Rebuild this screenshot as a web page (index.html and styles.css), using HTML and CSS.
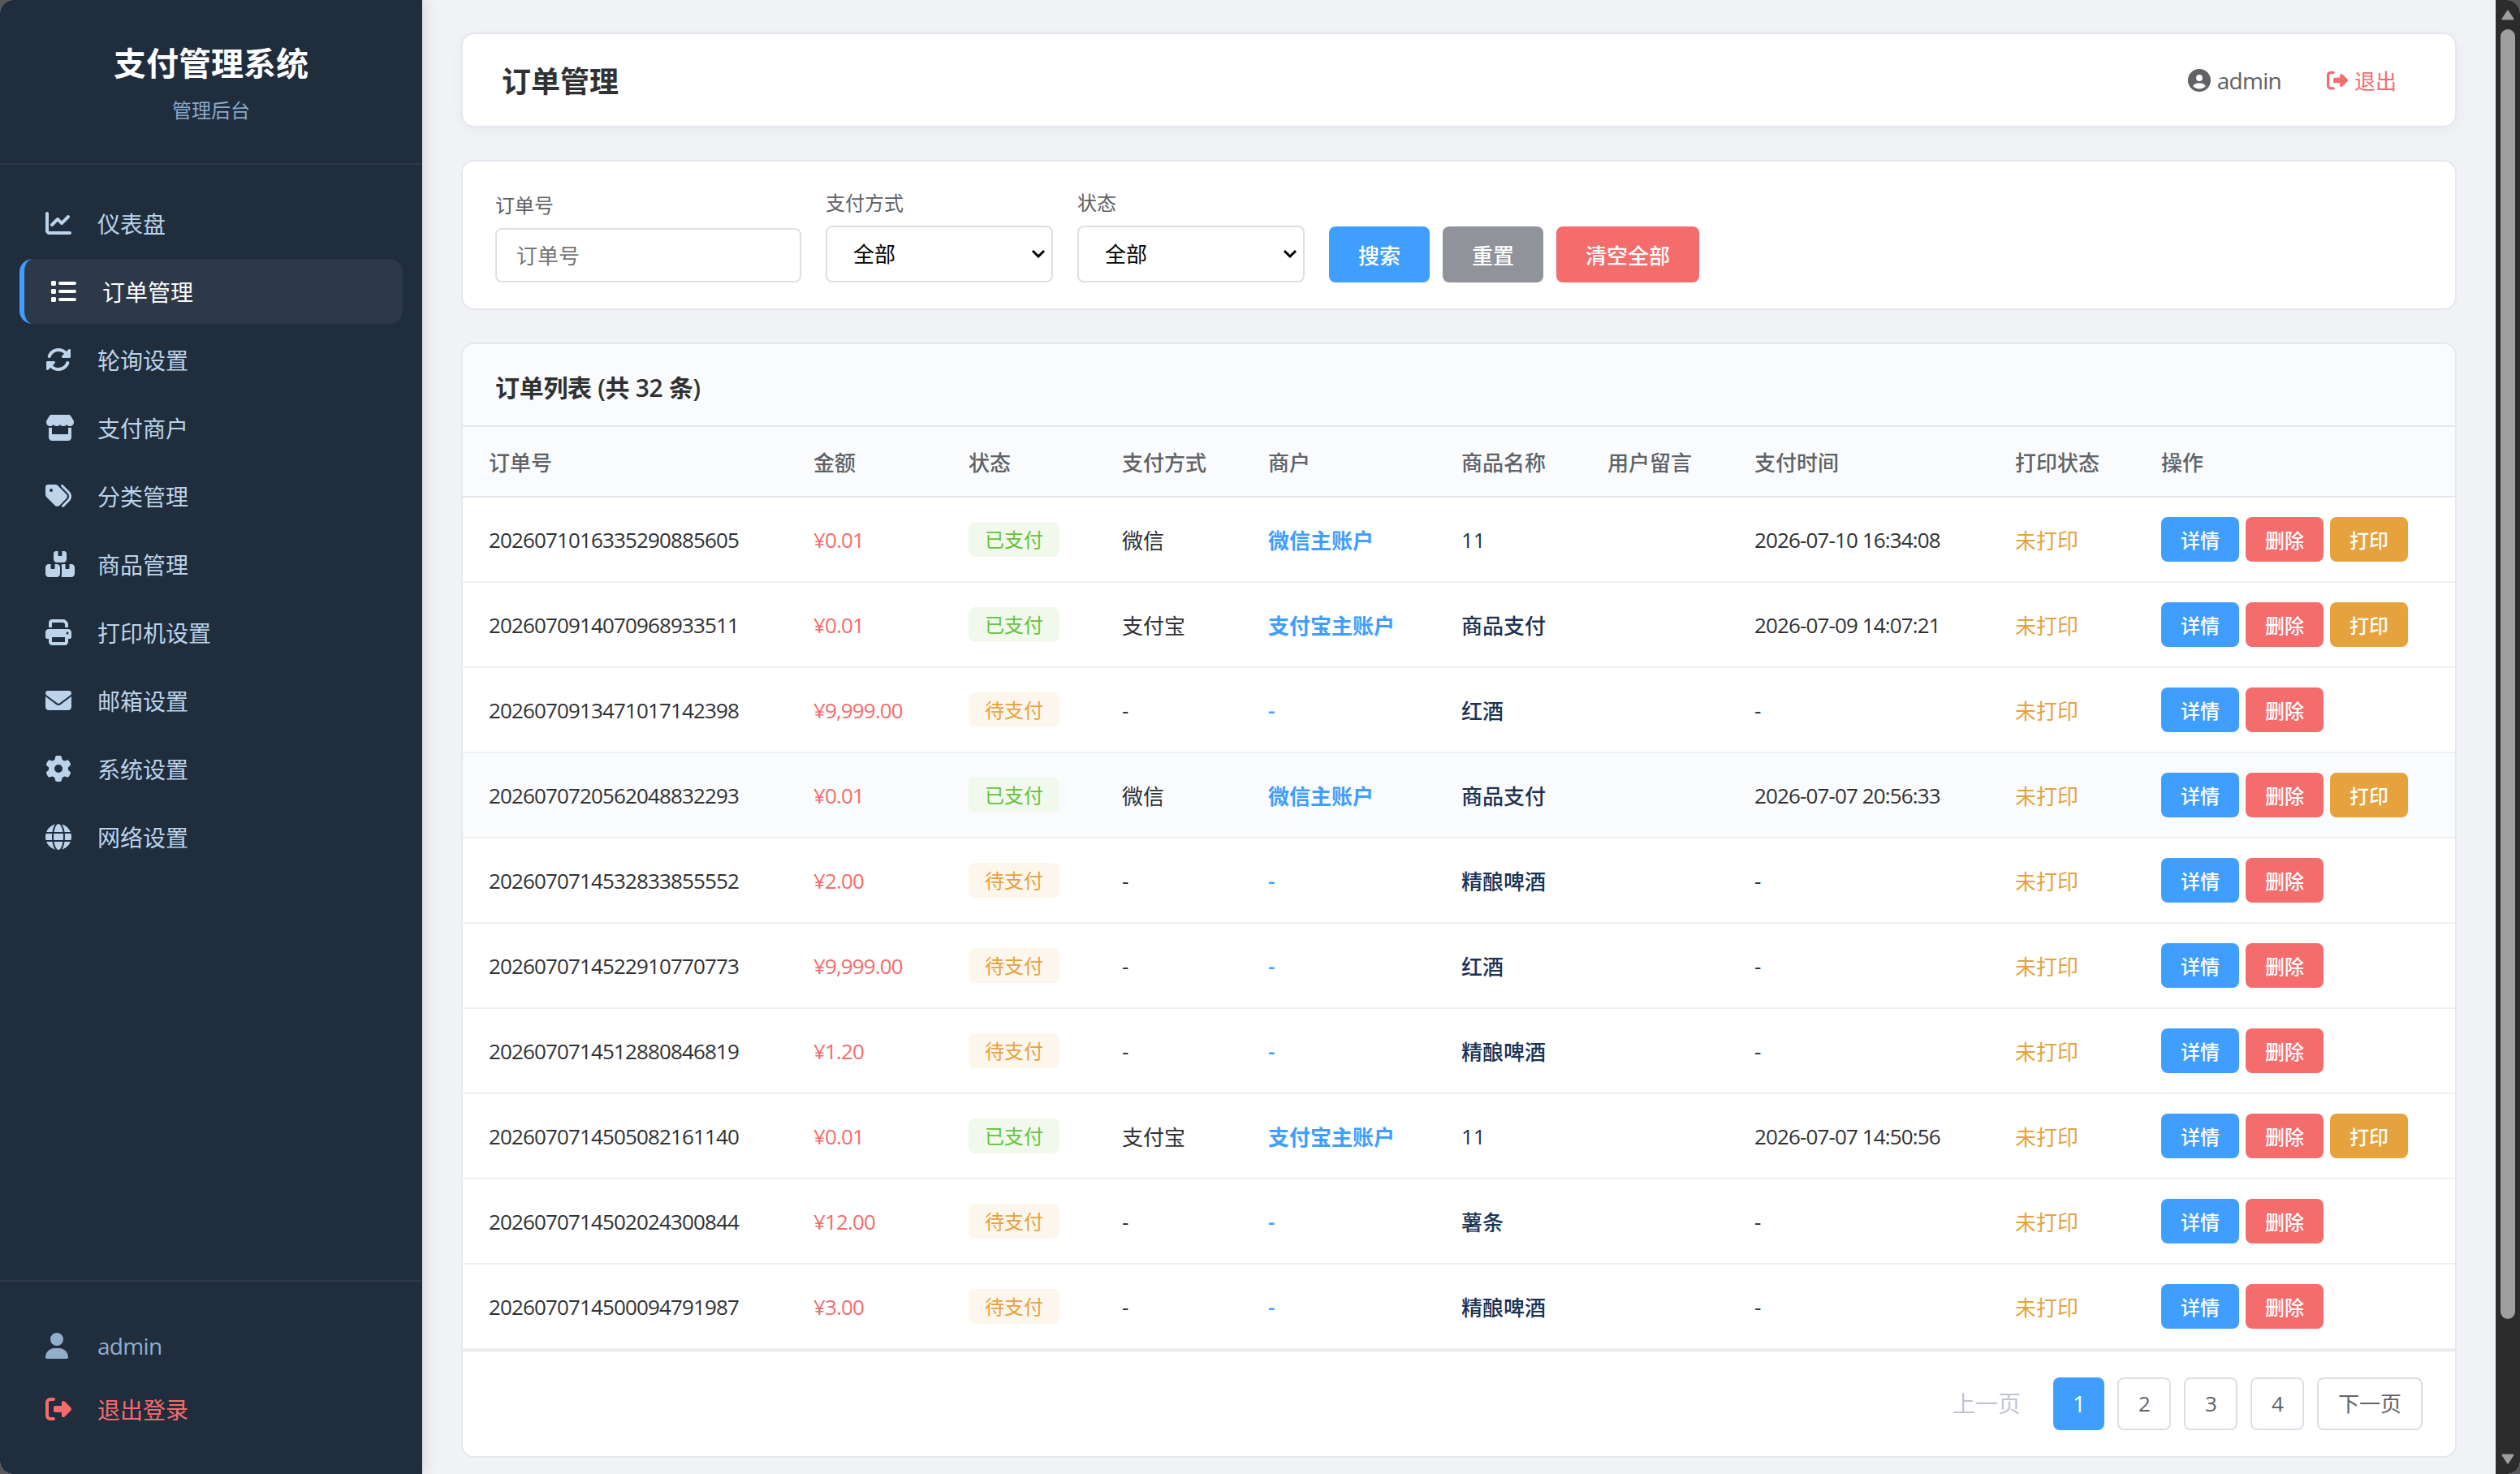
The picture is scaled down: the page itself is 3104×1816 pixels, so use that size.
FILE: index.html
```html
<!DOCTYPE html>
<html lang="zh-CN">
  <head>
    <meta charset="utf-8" />
    <meta name="viewport" content="width=device-width, initial-scale=1.0" />
    <title>订单管理 - 支付管理系统</title>
    <link rel="stylesheet" href="styles.css">
  </head>
  <body>
    <div class="layout">
      <aside class="sidebar">
        <div class="sidebar-header">
          <h2>支付管理系统</h2>
          <p>管理后台</p>
        </div>
        <nav class="sidebar-nav">
          <a class="nav-item">
            <svg class="icon" viewBox="0 0 512 512"><path d="M64 64c0-17.7-14.3-32-32-32S0 46.3 0 64V400c0 44.2 35.8 80 80 80H480c17.7 0 32-14.3 32-32s-14.3-32-32-32H80c-8.8 0-16-7.2-16-16V64zm406.6 86.6c12.5-12.5 12.5-32.8 0-45.3s-32.8-12.5-45.3 0L320 210.7l-57.4-57.4c-12.5-12.5-32.8-12.5-45.3 0l-112 112c-12.5 12.5-12.5 32.8 0 45.3s32.8 12.5 45.3 0L240 221.3l57.4 57.4c12.5 12.5 32.8 12.5 45.3 0l128-128z"/></svg>
            <span>仪表盘</span>
          </a>
          <a class="nav-item active">
            <svg class="icon" viewBox="0 0 512 512"><path d="M40 48C26.7 48 16 58.7 16 72v48c0 13.3 10.7 24 24 24H88c13.3 0 24-10.7 24-24V72c0-13.3-10.7-24-24-24H40zM192 64c-17.7 0-32 14.3-32 32s14.3 32 32 32H480c17.7 0 32-14.3 32-32s-14.3-32-32-32H192zm0 160c-17.7 0-32 14.3-32 32s14.3 32 32 32H480c17.7 0 32-14.3 32-32s-14.3-32-32-32H192zm0 160c-17.7 0-32 14.3-32 32s14.3 32 32 32H480c17.7 0 32-14.3 32-32s-14.3-32-32-32H192zM16 232v48c0 13.3 10.7 24 24 24H88c13.3 0 24-10.7 24-24V232c0-13.3-10.7-24-24-24H40c-13.3 0-24 10.7-24 24zM40 368c-13.3 0-24 10.7-24 24v48c0 13.3 10.7 24 24 24H88c13.3 0 24-10.7 24-24V392c0-13.3-10.7-24-24-24H40z"/></svg>
            <span>订单管理</span>
          </a>
          <a class="nav-item">
            <svg class="icon" viewBox="0 0 512 512"><path d="M142.9 142.9c62.2-62.2 162.7-62.5 225.3-1L327 183c-6.9 6.9-8.9 17.2-5.2 26.2s12.5 14.8 22.2 14.8H472c13.3 0 24-10.7 24-24V72c0-9.7-5.8-18.5-14.8-22.2s-19.3-1.7-26.2 5.2L413.4 96.6c-87.6-86.5-228.7-86.2-315.8 1C73.2 122 55.6 150.7 44.8 181.4c-5.9 16.7 2.9 34.9 19.5 40.8s34.9-2.9 40.8-19.5c7.7-21.8 20.2-42.3 37.8-59.8zM16 312v128c0 9.7 5.8 18.5 14.8 22.2s19.3 1.7 26.2-5.2l41.6-41.6c87.6 86.5 228.7 86.2 315.8-1c24.4-24.4 42.1-53.1 52.9-83.7c5.9-16.7-2.9-34.9-19.5-40.8s-34.9 2.9-40.8 19.5c-7.7 21.8-20.2 42.3-37.8 59.8c-62.2 62.2-162.7 62.5-225.3 1L185 329c6.9-6.9 8.9-17.2 5.2-26.2s-12.5-14.8-22.2-14.8H40c-13.3 0-24 10.7-24 24z"/></svg>
            <span>轮询设置</span>
          </a>
          <a class="nav-item">
            <svg class="icon icon-wide" viewBox="0 0 576 512"><path d="M547.6 103.8L490.3 13.1C485.2 5 476.1 0 466.4 0H109.6C99.9 0 90.8 5 85.7 13.1L28.3 103.8c-29.6 46.8-3.4 111.9 51.9 119.4c4 .5 8.1 .8 12.1 .8c26.1 0 49.3-11.4 65.2-29c15.9 17.6 39.1 29 65.2 29c26.1 0 49.3-11.4 65.2-29c15.9 17.6 39.1 29 65.2 29c26.2 0 49.3-11.4 65.2-29c16 17.6 39.1 29 65.2 29c4.1 0 8.1-.3 12.1-.8c55.5-7.4 81.8-72.5 52.1-119.4zM499.7 254.9l-.1 0c-5.3 .7-10.7 1.1-16.2 1.1c-12.4 0-24.3-1.9-35.4-5.3V384H128V250.6c-11.2 3.5-23.2 5.4-35.6 5.4c-5.5 0-11-.4-16.3-1.1l-.1 0c-4.1-.6-8.1-1.3-12-2.3V384v64c0 35.3 28.7 64 64 64H448c35.3 0 64-28.7 64-64V384 252.6c-4 1-8 1.8-12.3 2.3z"/></svg>
            <span>支付商户</span>
          </a>
          <a class="nav-item">
            <svg class="icon" viewBox="0 0 512 512"><path d="M345 39.1L472.8 168.4c52.4 53 52.4 138.2 0 191.2L360.8 472.9c-9.3 9.4-24.5 9.5-33.9 .2s-9.5-24.5-.2-33.9L438.6 325.9c33.9-34.3 33.9-89.4 0-123.7L310.9 72.9c-9.3-9.4-9.2-24.6 .2-33.9s24.6-9.2 33.9 .2zM0 229.5V80C0 53.5 21.5 32 48 32H197.5c17 0 33.3 6.7 45.3 18.7l168 168c25 25 25 65.5 0 90.5L277.3 442.7c-25 25-65.5 25-90.5 0l-168-168C6.7 262.7 0 246.5 0 229.5zM144 144a32 32 0 1 0 -64 0 32 32 0 1 0 64 0z"/></svg>
            <span>分类管理</span>
          </a>
          <a class="nav-item">
            <svg class="icon icon-wide" viewBox="0 0 576 512"><path d="M248 0H208c-26.5 0-48 21.5-48 48V160c0 35.3 28.7 64 64 64H352c35.3 0 64-28.7 64-64V48c0-26.5-21.5-48-48-48H328V80c0 8.8-7.2 16-16 16H264c-8.8 0-16-7.2-16-16V0zM64 256c-35.3 0-64 28.7-64 64V448c0 35.3 28.7 64 64 64H224c35.3 0 64-28.7 64-64V320c0-35.3-28.7-64-64-64H184v80c0 8.8-7.2 16-16 16H120c-8.8 0-16-7.2-16-16V256H64zM352 512H512c35.3 0 64-28.7 64-64V320c0-35.3-28.7-64-64-64H472v80c0 8.8-7.2 16-16 16H408c-8.8 0-16-7.2-16-16V256H352c-15 0-28.8 5.1-39.7 13.8c4.9 10.4 7.7 22 7.7 34.2V464c0 12.2-2.8 23.8-7.7 34.2C323.2 506.9 337 512 352 512z"/></svg>
            <span>商品管理</span>
          </a>
          <a class="nav-item">
            <svg class="icon" viewBox="0 0 512 512"><path d="M128 0C92.7 0 64 28.7 64 64v96h64V64H354.7L384 93.3V160h64V93.3c0-17-6.7-33.3-18.7-45.3L400 18.7C388 6.7 371.7 0 354.7 0H128zM384 352v32 64H128V384 368 352H384zm64 32h32c17.7 0 32-14.3 32-32V256c0-35.3-28.7-64-64-64H64c-35.3 0-64 28.7-64 64v96c0 17.7 14.3 32 32 32H64v64c0 35.3 28.7 64 64 64H384c35.3 0 64-28.7 64-64V384zM432 248a24 24 0 1 1 0 48 24 24 0 1 1 0-48z"/></svg>
            <span>打印机设置</span>
          </a>
          <a class="nav-item">
            <svg class="icon" viewBox="0 0 512 512"><path d="M48 64C21.5 64 0 85.5 0 112c0 15.1 7.1 29.3 19.2 38.4L236.8 313.6c11.4 8.5 27 8.5 38.4 0L492.8 150.4c12.1-9.1 19.2-23.3 19.2-38.4c0-26.5-21.5-48-48-48H48zM0 176V384c0 35.3 28.7 64 64 64H448c35.3 0 64-28.7 64-64V176L294.4 339.2c-22.8 17.1-54 17.1-76.8 0L0 176z"/></svg>
            <span>邮箱设置</span>
          </a>
          <a class="nav-item">
            <svg class="icon" viewBox="0 0 512 512"><path d="M495.9 166.6c3.2 8.7 .5 18.4-6.4 24.6l-43.3 39.4c1.1 8.3 1.7 16.8 1.7 25.4s-.6 17.1-1.7 25.4l43.3 39.4c6.9 6.2 9.6 15.9 6.4 24.6c-4.4 11.9-9.7 23.3-15.8 34.3l-4.7 8.1c-6.6 11-14 21.4-22.1 31.2c-5.9 7.2-15.7 9.6-24.5 6.8l-55.7-17.7c-13.4 10.3-28.2 18.9-44 25.4l-12.5 57.1c-2 9.1-9 16.3-18.2 17.8c-13.8 2.3-28 3.5-42.5 3.5s-28.7-1.2-42.5-3.5c-9.2-1.5-16.2-8.7-18.2-17.8l-12.5-57.1c-15.8-6.5-30.6-15.1-44-25.4L83.1 425.9c-8.8 2.8-18.6 .3-24.5-6.8c-8.1-9.8-15.5-20.2-22.1-31.2l-4.7-8.1c-6.1-11-11.4-22.4-15.8-34.3c-3.2-8.7-.5-18.4 6.4-24.6l43.3-39.4C64.6 273.1 64 264.6 64 256s.6-17.1 1.7-25.4L22.4 191.2c-6.9-6.2-9.6-15.9-6.4-24.6c4.4-11.9 9.7-23.3 15.8-34.3l4.7-8.1c6.6-11 14-21.4 22.1-31.2c5.9-7.2 15.7-9.6 24.5-6.8l55.7 17.7c13.4-10.3 28.2-18.9 44-25.4l12.5-57.1c2-9.1 9-16.3 18.2-17.8C227.3 1.2 241.5 0 256 0s28.7 1.2 42.5 3.5c9.2 1.5 16.2 8.7 18.2 17.8l12.5 57.1c15.8 6.5 30.6 15.1 44 25.4l55.7-17.7c8.8-2.8 18.6-.3 24.5 6.8c8.1 9.8 15.5 20.2 22.1 31.2l4.7 8.1c6.1 11 11.4 22.4 15.8 34.3zM256 336a80 80 0 1 0 0-160 80 80 0 1 0 0 160z"/></svg>
            <span>系统设置</span>
          </a>
          <a class="nav-item">
            <svg class="icon" viewBox="0 0 512 512"><path d="M352 256c0 22.2-1.2 43.6-3.3 64H163.3c-2.2-20.4-3.3-41.8-3.3-64s1.2-43.6 3.3-64H348.7c2.2 20.4 3.3 41.8 3.3 64zm28.8-64H503.9c5.3 20.5 8.1 41.9 8.1 64s-2.8 43.5-8.1 64H380.8c2.1-20.6 3.2-42 3.2-64s-1.1-43.4-3.2-64zm112.6-32H376.7c-10-63.9-29.8-117.4-55.3-151.6c78.3 20.7 142 77.5 171.9 151.6zm-149.1 0H167.7c6.1-36.4 15.5-68.6 27-94.7c10.5-23.6 22.2-40.7 33.5-51.5C239.4 3.2 248.7 0 256 0s16.6 3.2 27.8 13.8c11.3 10.8 23 27.9 33.5 51.5c11.6 26 20.9 58.2 27 94.7zm-209 0H18.6C48.6 85.9 112.2 29.1 190.6 8.4C165.1 42.6 145.3 96.1 135.3 160zM8.1 192H131.2c-2.1 20.6-3.2 42-3.2 64s1.1 43.4 3.2 64H8.1C2.8 299.5 0 278.1 0 256s2.8-43.5 8.1-64zM194.7 446.6c-11.6-26-20.9-58.2-27-94.6H344.3c-6.1 36.4-15.5 68.6-27 94.6c-10.5 23.6-22.2 40.7-33.5 51.5C272.6 508.8 263.3 512 256 512s-16.6-3.2-27.8-13.8c-11.3-10.8-23-27.9-33.5-51.5zM135.3 352c10 63.9 29.8 117.4 55.3 151.6C112.2 482.9 48.6 426.1 18.6 352H135.3zm358.1 0c-30 74.1-93.6 130.9-171.9 151.6c25.5-34.2 45.2-87.7 55.3-151.6H493.4z"/></svg>
            <span>网络设置</span>
          </a>
        </nav>
        <div class="sidebar-footer">
          <div class="footer-item">
            <svg class="icon icon-narrow" viewBox="0 0 448 512"><path d="M224 256A128 128 0 1 0 224 0a128 128 0 1 0 0 256zm-45.7 48C79.8 304 0 383.8 0 482.3C0 498.7 13.3 512 29.7 512H418.3c16.4 0 29.7-13.3 29.7-29.7C448 383.8 368.2 304 269.7 304H178.3z"/></svg>
            <span class="latin">admin</span>
          </div>
          <a class="footer-item logout">
            <svg class="icon" viewBox="0 0 512 512"><path d="M377.9 105.9L500.7 228.7c7.2 7.2 11.3 17.1 11.3 27.3s-4.1 20.1-11.3 27.3L377.9 406.1c-6.4 6.4-15 9.9-24 9.9c-18.7 0-33.9-15.2-33.9-33.9l0-62.1-128 0c-17.7 0-32-14.3-32-32l0-64c0-17.7 14.3-32 32-32l128 0 0-62.1c0-18.7 15.2-33.9 33.9-33.9c9 0 17.6 3.6 24 9.9zM160 96L96 96c-17.7 0-32 14.3-32 32l0 256c0 17.7 14.3 32 32 32l64 0c17.7 0 32 14.3 32 32s-14.3 32-32 32l-64 0c-53 0-96-43-96-96L0 128C0 75 43 32 96 32l64 0c17.7 0 32 14.3 32 32s-14.3 32-32 32z"/></svg>
            <span>退出登录</span>
          </a>
        </div>
      </aside>

      <main class="main">
        <header class="page-header">
          <h1>订单管理</h1>
          <div class="user-info">
            <span class="user-name">
              <svg class="icon" viewBox="0 0 512 512"><path d="M399 384.2C376.9 345.8 335.4 320 288 320H224c-47.4 0-88.9 25.8-111 64.2c35.2 39.2 86.2 63.8 143 63.8s107.8-24.7 143-63.8zM0 256a256 256 0 1 1 512 0A256 256 0 1 1 0 256zm256 16a72 72 0 1 0 0-144 72 72 0 1 0 0 144z"/></svg>
              <span class="latin">admin</span>
            </span>
            <a class="user-logout">
              <svg class="icon" viewBox="0 0 512 512"><path d="M377.9 105.9L500.7 228.7c7.2 7.2 11.3 17.1 11.3 27.3s-4.1 20.1-11.3 27.3L377.9 406.1c-6.4 6.4-15 9.9-24 9.9c-18.7 0-33.9-15.2-33.9-33.9l0-62.1-128 0c-17.7 0-32-14.3-32-32l0-64c0-17.7 14.3-32 32-32l128 0 0-62.1c0-18.7 15.2-33.9 33.9-33.9c9 0 17.6 3.6 24 9.9zM160 96L96 96c-17.7 0-32 14.3-32 32l0 256c0 17.7 14.3 32 32 32l64 0c17.7 0 32 14.3 32 32s-14.3 32-32 32l-64 0c-53 0-96-43-96-96L0 128C0 75 43 32 96 32l64 0c17.7 0 32 14.3 32 32s-14.3 32-32 32z"/></svg>
              <span>退出</span>
            </a>
          </div>
        </header>

        <form class="filter-card">
          <div class="form-group">
            <label>订单号</label>
            <input class="form-input" type="text" placeholder="订单号" />
          </div>
          <div class="form-group">
            <label>支付方式</label>
            <div class="form-select">
              <select><option>全部</option></select>
              <svg class="chevron" viewBox="0 0 18 12"><path d="M2 2l7 7 7-7"/></svg>
            </div>
          </div>
          <div class="form-group">
            <label>状态</label>
            <div class="form-select">
              <select><option>全部</option></select>
              <svg class="chevron" viewBox="0 0 18 12"><path d="M2 2l7 7 7-7"/></svg>
            </div>
          </div>
          <div class="form-actions">
            <button type="button" class="btn btn-primary">搜索</button>
            <button type="button" class="btn btn-info">重置</button>
            <button type="button" class="btn btn-danger">清空全部</button>
          </div>
        </form>

        <section class="table-card">
          <div class="table-header">
            <h3>订单列表 (共 32 条)</h3>
          </div>
          <table>
            <colgroup>
              <col class="col-no" /><col class="col-amount" /><col class="col-status" /><col class="col-method" /><col class="col-merchant" />
              <col class="col-product" /><col class="col-note" /><col class="col-time" /><col class="col-print" /><col class="col-action" />
            </colgroup>
            <thead>
              <tr><th>订单号</th><th>金额</th><th>状态</th><th>支付方式</th><th>商户</th><th>商品名称</th><th>用户留言</th><th>支付时间</th><th>打印状态</th><th>操作</th></tr>
            </thead>
            <tbody>
              <tr>
                <td class="num">2026071016335290885605</td>
                <td class="amount">¥0.01</td>
                <td><span class="badge badge-success">已支付</span></td>
                <td>微信</td>
                <td class="merchant">微信主账户</td>
                <td class="product">11</td>
                <td></td>
                <td class="time">2026-07-10 16:34:08</td>
                <td class="unprinted">未打印</td>
                <td><div class="actions"><button class="btn-sm btn-primary">详情</button><button class="btn-sm btn-danger">删除</button><button class="btn-sm btn-warning">打印</button></div></td>
              </tr>
              <tr>
                <td class="num">2026070914070968933511</td>
                <td class="amount">¥0.01</td>
                <td><span class="badge badge-success">已支付</span></td>
                <td>支付宝</td>
                <td class="merchant">支付宝主账户</td>
                <td class="product">商品支付</td>
                <td></td>
                <td class="time">2026-07-09 14:07:21</td>
                <td class="unprinted">未打印</td>
                <td><div class="actions"><button class="btn-sm btn-primary">详情</button><button class="btn-sm btn-danger">删除</button><button class="btn-sm btn-warning">打印</button></div></td>
              </tr>
              <tr>
                <td class="num">2026070913471017142398</td>
                <td class="amount">¥9,999.00</td>
                <td><span class="badge badge-warning">待支付</span></td>
                <td>-</td>
                <td class="merchant">-</td>
                <td class="product">红酒</td>
                <td></td>
                <td class="time">-</td>
                <td class="unprinted">未打印</td>
                <td><div class="actions"><button class="btn-sm btn-primary">详情</button><button class="btn-sm btn-danger">删除</button></div></td>
              </tr>
              <tr class="hover">
                <td class="num">2026070720562048832293</td>
                <td class="amount">¥0.01</td>
                <td><span class="badge badge-success">已支付</span></td>
                <td>微信</td>
                <td class="merchant">微信主账户</td>
                <td class="product">商品支付</td>
                <td></td>
                <td class="time">2026-07-07 20:56:33</td>
                <td class="unprinted">未打印</td>
                <td><div class="actions"><button class="btn-sm btn-primary">详情</button><button class="btn-sm btn-danger">删除</button><button class="btn-sm btn-warning">打印</button></div></td>
              </tr>
              <tr>
                <td class="num">2026070714532833855552</td>
                <td class="amount">¥2.00</td>
                <td><span class="badge badge-warning">待支付</span></td>
                <td>-</td>
                <td class="merchant">-</td>
                <td class="product">精酿啤酒</td>
                <td></td>
                <td class="time">-</td>
                <td class="unprinted">未打印</td>
                <td><div class="actions"><button class="btn-sm btn-primary">详情</button><button class="btn-sm btn-danger">删除</button></div></td>
              </tr>
              <tr>
                <td class="num">2026070714522910770773</td>
                <td class="amount">¥9,999.00</td>
                <td><span class="badge badge-warning">待支付</span></td>
                <td>-</td>
                <td class="merchant">-</td>
                <td class="product">红酒</td>
                <td></td>
                <td class="time">-</td>
                <td class="unprinted">未打印</td>
                <td><div class="actions"><button class="btn-sm btn-primary">详情</button><button class="btn-sm btn-danger">删除</button></div></td>
              </tr>
              <tr>
                <td class="num">2026070714512880846819</td>
                <td class="amount">¥1.20</td>
                <td><span class="badge badge-warning">待支付</span></td>
                <td>-</td>
                <td class="merchant">-</td>
                <td class="product">精酿啤酒</td>
                <td></td>
                <td class="time">-</td>
                <td class="unprinted">未打印</td>
                <td><div class="actions"><button class="btn-sm btn-primary">详情</button><button class="btn-sm btn-danger">删除</button></div></td>
              </tr>
              <tr>
                <td class="num">2026070714505082161140</td>
                <td class="amount">¥0.01</td>
                <td><span class="badge badge-success">已支付</span></td>
                <td>支付宝</td>
                <td class="merchant">支付宝主账户</td>
                <td class="product">11</td>
                <td></td>
                <td class="time">2026-07-07 14:50:56</td>
                <td class="unprinted">未打印</td>
                <td><div class="actions"><button class="btn-sm btn-primary">详情</button><button class="btn-sm btn-danger">删除</button><button class="btn-sm btn-warning">打印</button></div></td>
              </tr>
              <tr>
                <td class="num">2026070714502024300844</td>
                <td class="amount">¥12.00</td>
                <td><span class="badge badge-warning">待支付</span></td>
                <td>-</td>
                <td class="merchant">-</td>
                <td class="product">薯条</td>
                <td></td>
                <td class="time">-</td>
                <td class="unprinted">未打印</td>
                <td><div class="actions"><button class="btn-sm btn-primary">详情</button><button class="btn-sm btn-danger">删除</button></div></td>
              </tr>
              <tr>
                <td class="num">2026070714500094791987</td>
                <td class="amount">¥3.00</td>
                <td><span class="badge badge-warning">待支付</span></td>
                <td>-</td>
                <td class="merchant">-</td>
                <td class="product">精酿啤酒</td>
                <td></td>
                <td class="time">-</td>
                <td class="unprinted">未打印</td>
                <td><div class="actions"><button class="btn-sm btn-primary">详情</button><button class="btn-sm btn-danger">删除</button></div></td>
              </tr>
            </tbody>
          </table>
          <div class="pagination">
            <span class="page-disabled">上一页</span>
            <span class="page-current">1</span>
            <a class="page-link">2</a>
            <a class="page-link">3</a>
            <a class="page-link">4</a>
            <a class="page-link page-next">下一页</a>
          </div>
        </section>
      </main>

      <div class="scrollbar">
        <svg class="scroll-arrow" viewBox="0 0 16 13"><path d="M8 1.5L14.5 11.5H1.5Z"/></svg>
        <div class="scroll-thumb"></div>
        <svg class="scroll-arrow scroll-down" viewBox="0 0 16 13"><path d="M8 11.5L1.5 1.5H14.5Z"/></svg>
      </div>
    </div>
  </body>
</html>
```

FILE: styles.css
```css
* {
  margin: 0;
  padding: 0;
  box-sizing: border-box;
}

body {
  font-family: "Open Sans", "Noto Sans CJK SC", sans-serif;
  font-size: 28px;
  color: #303133;
  background: #58585b;
}

button,
input,
select {
  font-family: inherit;
}

.layout {
  display: flex;
  width: 3104px;
  height: 1816px;
  overflow: hidden;
  border-radius: 16px;
  background: #f0f2f6;
}

.icon {
  height: 32px;
  width: 32px;
  fill: currentColor;
  flex-shrink: 0;
}

.icon-wide {
  width: 36px;
}

.icon-narrow {
  width: 28px;
}

.latin {
  letter-spacing: -0.025em;
}

/* sidebar */
.sidebar {
  display: flex;
  flex-direction: column;
  width: 520px;
  flex-shrink: 0;
  background: #202d3d;
  box-shadow: 4px 0 16px rgba(0, 0, 0, 0.1);
  z-index: 1;
}

.sidebar-header {
  height: 203px;
  padding-top: 48px;
  text-align: center;
  border-bottom: 2px solid #2d3948;
}

.sidebar-header h2 {
  font-size: 40px;
  font-weight: 700;
  line-height: 60px;
  color: #fff;
}

.sidebar-header p {
  margin-top: 10px;
  font-size: 24px;
  line-height: 36px;
  color: #8aa9c7;
}

.sidebar-nav {
  flex: 1;
  padding: 32px 24px;
}

.nav-item {
  display: flex;
  align-items: center;
  height: 80px;
  margin-bottom: 4px;
  padding-left: 32px;
  border-radius: 16px;
  color: #bcd3e9;
}

.nav-item .icon,
.footer-item .icon {
  margin-right: 32px;
}

.nav-item .icon-wide {
  margin-right: 28px;
}

.footer-item .icon-narrow {
  margin-right: 36px;
}

.nav-item.active {
  border-left: 6px solid #409eff;
  background: #2d3949;
  color: #fff;
}

.sidebar-footer {
  padding: 40px 24px 41px;
  border-top: 2px solid #2d3948;
}

.footer-item {
  display: flex;
  align-items: center;
  height: 78px;
  padding-left: 32px;
  color: #91aecb;
}

.footer-item.logout {
  color: #f56c6c;
}

/* main */
.main {
  flex: 1;
  padding: 40px 48px 20px;
}

.page-header,
.filter-card,
.table-card {
  border: 2px solid #e4e7ed;
  border-radius: 16px;
  background: #fff;
}

.page-header {
  display: flex;
  align-items: center;
  justify-content: space-between;
  height: 117px;
  padding: 0 72px 0 48px;
  box-shadow: 0 4px 16px rgba(0, 0, 0, 0.04);
}

.page-header h1 {
  font-size: 36px;
  font-weight: 600;
}

.user-info {
  display: flex;
  align-items: center;
  gap: 56px;
  color: #606266;
}

.user-name,
.user-logout {
  display: flex;
  align-items: center;
  gap: 8px;
}

.user-name .icon {
  width: 28px;
  height: 28px;
}

.user-logout {
  font-size: 26px;
  color: #f56c6c;
}

.user-logout .icon {
  width: 26px;
  height: 26px;
}

.filter-card {
  display: flex;
  align-items: flex-end;
  gap: 30px;
  height: 185px;
  margin-top: 40px;
  padding: 0 40px 32px;
}

.form-group label {
  display: block;
  margin-bottom: 10px;
  font-size: 24px;
  line-height: 36px;
  color: #606266;
}

.form-input {
  display: block;
  width: 377px;
  height: 67px;
  padding: 0 24px;
  border: 2px solid #dcdfe6;
  border-radius: 8px;
  font-size: 26px;
}

.form-input::placeholder {
  color: #757575;
}

.form-select {
  display: flex;
  align-items: center;
  width: 280px;
  height: 70px;
  padding: 0 7px 0 32px;
  border: 2px solid #dcdfe6;
  border-radius: 8px;
}

.form-select select {
  flex: 1;
  appearance: none;
  border: none;
  background: none;
  font-size: 26px;
  color: #000;
}

.chevron {
  width: 18px;
  height: 12px;
  fill: none;
  stroke: #000;
  stroke-width: 3;
}

.form-actions {
  display: flex;
  gap: 16px;
}

.btn,
.btn-sm {
  border: none;
  border-radius: 8px;
  font-weight: 500;
  color: #fff;
}

.btn {
  height: 69px;
  padding: 0 36px;
  font-size: 26px;
}

.btn-sm {
  height: 55px;
  padding: 0 24px;
  font-size: 24px;
}

.btn-primary {
  background: #409eff;
}

.btn-info {
  background: #909399;
}

.btn-danger {
  background: #f56c6c;
}

.btn-warning {
  background: #e6a23c;
}

/* order table */
.table-card {
  height: 1374px;
  margin-top: 40px;
  overflow: hidden;
}

.table-header {
  display: flex;
  align-items: center;
  height: 102px;
  padding: 4px 40px 0;
  border-bottom: 2px solid #e4e7ed;
  background: #fafbfd;
}

.table-header h3 {
  font-size: 30px;
  font-weight: 600;
  letter-spacing: -0.01em;
}

table {
  width: 2454px;
  table-layout: fixed;
  border-collapse: separate;
  border-spacing: 0;
  font-size: 26px;
}

.col-no { width: 400px; }
.col-amount { width: 191px; }
.col-status { width: 189px; }
.col-method { width: 180px; }
.col-merchant { width: 238px; }
.col-product { width: 180px; }
.col-note { width: 181px; }
.col-time { width: 321px; }
.col-print { width: 180px; }
.col-action { width: 394px; }

th,
td {
  padding: 0 0 0 32px;
  text-align: left;
  white-space: nowrap;
}

th {
  height: 87px;
  border-bottom: 2px solid #e4e7ed;
  background: #fafbfd;
  font-weight: 500;
  color: #606266;
}

td {
  height: 105px;
  border-bottom: 2px solid #f0f0f1;
}

.hover td {
  background: #fafbfd;
}

.num {
  letter-spacing: -0.0335em;
}

.amount {
  font-weight: 500;
  letter-spacing: -0.0335em;
  color: #f56c6c;
}

.merchant {
  font-weight: 600;
  color: #409eff;
}

.product {
  font-weight: 500;
  color: #1a3353;
}

.time {
  letter-spacing: -0.0335em;
}

.unprinted {
  color: #e6a23c;
}

.badge {
  display: inline-block;
  height: 43px;
  padding: 0 20px;
  border-radius: 8px;
  font-size: 24px;
  line-height: 43px;
  vertical-align: middle;
}

.badge-success {
  background: #f0f9eb;
  color: #67c23a;
}

.badge-warning {
  background: #fdf6ec;
  color: #e6a23c;
}

.actions {
  display: flex;
  gap: 8px;
}

.pagination {
  display: flex;
  align-items: center;
  justify-content: flex-end;
  gap: 16px;
  padding: 32px 40px;
  border-top: 2px solid #e4e7ed;
}

.page-disabled,
.page-current,
.page-link {
  height: 65px;
  padding: 0 24px;
  border-radius: 8px;
  line-height: 65px;
}

.page-disabled {
  color: #c0c4cc;
}

.page-current {
  width: 63px;
  background: #409eff;
  color: #fff;
}

.page-link {
  width: 66px;
  border: 2px solid #dcdfe6;
  font-size: 26px;
  line-height: 61px;
  color: #606266;
}

.page-next {
  width: 130px;
}

/* scrollbar */
.scrollbar {
  display: flex;
  flex-direction: column;
  align-items: center;
  width: 30px;
  padding: 12px 0;
  background: #2c2c2c;
}

.scroll-arrow {
  width: 16px;
  height: 13px;
  fill: #9f9f9f;
  stroke: #9f9f9f;
  stroke-width: 2;
  stroke-linejoin: round;
}

.scroll-thumb {
  width: 18px;
  height: 1589px;
  margin-top: 11px;
  border-radius: 9px;
  background: #9f9f9f;
}

.scroll-down {
  margin-top: auto;
}
```
